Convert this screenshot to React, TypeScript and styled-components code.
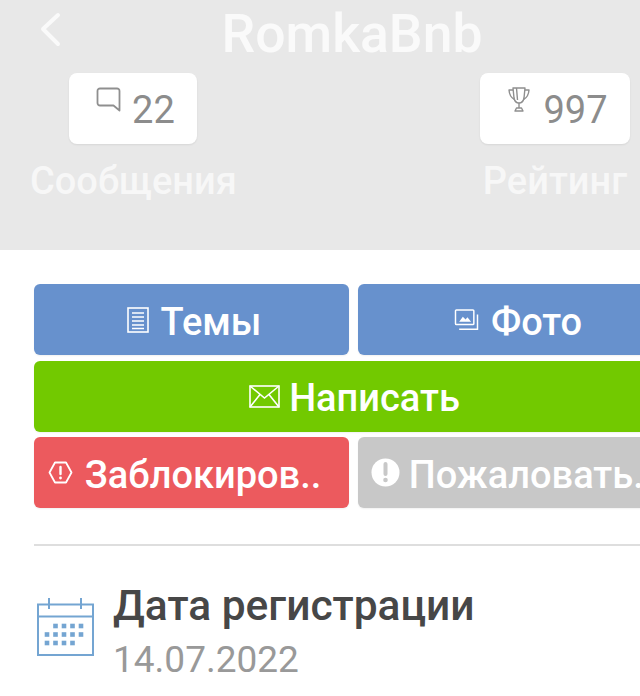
import React from "react";
import styled, { createGlobalStyle } from "styled-components";

const Global = createGlobalStyle`
  html, body { margin: 0; padding: 0; background: #fff; overflow: hidden; height: 696px; width: 640px; }
  #root { width: 640px; height: 696px; overflow: hidden; }
  * { box-sizing: border-box; }
`;

const Page = styled.div`
  width: 706px;
  font-family: Roboto, "Liberation Sans", sans-serif;
`;

const Header = styled.header`
  height: 250px;
  background: #e8e8e8;
  padding: 0 76px 0 30px;
  display: flex;
  flex-direction: column;
`;

const TopBar = styled.div`
  height: 73px;
  display: flex;
  align-items: flex-start;
  position: relative;
`;

const BackIcon = styled.svg`
  position: absolute;
  left: 9px;
  top: 12px;
  width: 24px;
  height: 36px;
`;

const Title = styled.h1`
  flex: 1;
  margin: 2px 0 0;
  padding-left: 44px;
  text-align: center;
  font-size: 53.5px;
  line-height: 64px;
  font-weight: 500;
  color: #fafafa;
`;

const Stats = styled.div`
  display: flex;
  justify-content: space-between;
`;

const Stat = styled.div`
  display: flex;
  flex-direction: column;
  align-items: center;
  gap: 17px;
`;

const StatBox = styled.div<{ $w: number; $gap: number; $left: number }>`
  width: ${(p) => p.$w}px;
  height: 71px;
  padding-left: ${(p) => p.$left}px;
  background: #fff;
  border-radius: 8px;
  box-shadow: 0 1px 2px rgba(0, 0, 0, 0.08);
  display: flex;
  align-items: center;
  justify-content: center;
  gap: ${(p) => p.$gap}px;
  color: #8c8c8c;
  font-size: 38px;
  line-height: 67px;
`;

const StatValue = styled.span`
  padding-top: 4px;
`;

const StatIcon = styled.svg<{ $w: number; $h: number }>`
  width: ${(p) => p.$w}px;
  height: ${(p) => p.$h}px;
  margin-top: -18px;
  flex: none;
`;

const StatLabel = styled.div`
  font-size: 38px;
  line-height: 40px;
  font-weight: 500;
  color: #f7f7f7;
  white-space: nowrap;
`;

const Actions = styled.section`
  padding: 34px 33px 0 34px;
  display: flex;
  flex-direction: column;
  gap: 5.5px;
`;

const ActionRow = styled.div`
  display: grid;
  grid-template-columns: 315px 315px;
  gap: 9px;
`;

const Action = styled.div<{ $bg: string; $wide?: boolean; $left?: number; $right?: number; $gap?: number }>`
  grid-column: ${(p) => (p.$wide ? "1 / -1" : "auto")};
  height: 71px;
  padding: 0 ${(p) => p.$right ?? 0}px 0 ${(p) => p.$left ?? 0}px;
  background: ${(p) => p.$bg};
  border-radius: 6px;
  display: flex;
  align-items: center;
  justify-content: center;
  gap: ${(p) => p.$gap ?? 12}px;
  color: #fff;
  font-size: 38px;
  line-height: 46px;
  font-weight: 500;
  white-space: nowrap;
  overflow: hidden;
  box-shadow: 0 1px 2px rgba(0, 0, 0, 0.06);
`;

const ActionLabel = styled.span`
  padding-top: 4px;
`;

const ActionIcon = styled.svg`
  flex: none;
`;

const Divider = styled.hr`
  margin: 36px 0 0 34px;
  border: 0;
  height: 2px;
  background: #dedede;
`;

const Info = styled.div`
  margin-top: 33px;
  padding-left: 37px;
  display: flex;
  align-items: flex-start;
  gap: 19px;
`;

const InfoIcon = styled.svg`
  width: 57px;
  height: 58px;
  flex: none;
  margin-top: 19px;
`;

const InfoText = styled.div`
  display: flex;
  flex-direction: column;
`;

const InfoTitle = styled.div`
  font-size: 42.5px;
  line-height: 54px;
  font-weight: 500;
  color: #474747;
`;

const InfoValue = styled.div`
  margin-top: 4px;
  font-size: 37px;
  line-height: 46px;
  color: #999;
`;

const dotX = [10, 18.5, 27, 35.5, 44];
const dotRows: [number, number[]][] = [
  [28, [1, 2, 3, 4]],
  [36.5, [0, 1, 2, 3, 4]],
  [45, [0, 1, 2, 3]],
];
const dots = dotRows.flatMap(([y, cols]) => cols.map((c) => [dotX[c], y]));

export default function App() {
  return (
    <Page>
      <Global />
      <Header>
        <TopBar>
          <BackIcon viewBox="0 0 24 36" fill="none" stroke="#fafafa" strokeWidth="4" strokeLinecap="round" strokeLinejoin="round">
            <path d="M19 3 L4 17 L19 32" />
          </BackIcon>
          <Title>RomkaBnb</Title>
        </TopBar>
        <Stats>
          <Stat>
            <StatBox $w={128} $gap={11} $left={4}>
              <StatIcon $w={25} $h={25} viewBox="0 0 25 25" fill="none" stroke="#8f8f8f" strokeWidth="1.8" strokeLinejoin="round">
                <path d="M4 1.5 H21 A2.5 2.5 0 0 1 23.5 4 V23.5 L17.5 18.5 H4 A2.5 2.5 0 0 1 1.5 16 V4 A2.5 2.5 0 0 1 4 1.5 Z" />
              </StatIcon>
              <StatValue>22</StatValue>
            </StatBox>
            <StatLabel>Сообщения</StatLabel>
          </Stat>
          <Stat>
            <StatBox $w={150} $gap={13} $left={6}>
              <StatIcon $w={22} $h={25} viewBox="0 0 22 25" fill="none" stroke="#8f8f8f" strokeWidth="1.4" strokeLinejoin="round">
                <path d="M5 1 H17 L16 11 Q15 16 11 16 Q7 16 6 11 Z" />
                <path d="M8.5 1 L9.5 13 M5 3 H1 Q1.5 10 6.5 12.5 M17 3 H21 Q20.5 10 15.5 12.5" />
                <path d="M11 16 V21 M7 24 H15 L13.5 21 H8.5 Z" />
              </StatIcon>
              <StatValue>997</StatValue>
            </StatBox>
            <StatLabel>Рейтинг</StatLabel>
          </Stat>
        </Stats>
      </Header>
      <Actions>
        <ActionRow>
          <Action $bg="#6791cd" $left={5}>
            <ActionIcon width="22" height="26" viewBox="0 0 22 26" fill="none" stroke="#fff" strokeWidth="1.6">
              <rect x="1" y="1" width="20" height="24" />
              <path d="M5 6 H17 M5 10 H17 M5 14 H17 M5 18 H17 M5 21.5 H17" />
            </ActionIcon>
            <ActionLabel>Темы</ActionLabel>
          </Action>
          <Action $bg="#6791cd" $left={5}>
            <ActionIcon width="25" height="22" viewBox="0 0 26 24" fill="none" stroke="#fff" strokeWidth="1.6">
              <rect x="1" y="1" width="20" height="16" rx="1" />
              <path d="M25 6 V22 H5" />
              <path d="M5 14 L9 8.5 L12 11.5 L14 9 L18 14 Z" fill="#fff" stroke="none" />
            </ActionIcon>
            <ActionLabel>Фото</ActionLabel>
          </Action>
        </ActionRow>
        <ActionRow>
          <Action $bg="#72c900" $wide $gap={9} $left={2}>
            <ActionIcon width="31" height="23" viewBox="0 0 31 23" fill="none" stroke="#fff" strokeWidth="1.6">
              <rect x="1" y="1" width="29" height="21" />
              <path d="M1 1 L15.5 13 L30 1 M1 22 L11 9.5 M30 22 L20 9.5" />
            </ActionIcon>
            <ActionLabel>Написать</ActionLabel>
          </Action>
        </ActionRow>
        <ActionRow>
          <Action $bg="#ec5a5e" $right={14}>
            <ActionIcon width="25" height="23" viewBox="0 0 25 23" fill="none" stroke="#fff" strokeWidth="1.8">
              <path d="M7 1.5 H18 L23.5 11.5 L18 21.5 H7 L1.5 11.5 Z" strokeLinejoin="round" />
              <path d="M12.5 6 V13" strokeWidth="2.4" strokeLinecap="round" />
              <circle cx="12.5" cy="17" r="1.4" fill="#fff" stroke="none" />
            </ActionIcon>
            <ActionLabel>Заблокиров..</ActionLabel>
          </Action>
          <Action $bg="#c8c8c8" $right={6} $gap={9}>
            <ActionIcon width="29" height="29" viewBox="0 0 29 29">
              <circle cx="14.5" cy="14.5" r="14" fill="#fff" />
              <path d="M14.5 6 V16" stroke="#c8c8c8" strokeWidth="4" strokeLinecap="round" />
              <circle cx="14.5" cy="22" r="2.3" fill="#c8c8c8" />
            </ActionIcon>
            <ActionLabel>Пожаловать..</ActionLabel>
          </Action>
        </ActionRow>
      </Actions>
      <Divider />
      <Info>
        <InfoIcon viewBox="0 0 57 58" fill="none" stroke="#74a5d2" strokeWidth="2">
          <rect x="1" y="6.5" width="55" height="50.5" />
          <path d="M1 18.5 H56 M12 0 V11 M44 0 V11" />
          {dots.map(([x, y]) => (
            <rect key={`${x}-${y}`} x={x - 2.3} y={y - 2.3} width="4.6" height="4.6" fill="#74a5d2" stroke="none" />
          ))}
        </InfoIcon>
        <InfoText>
          <InfoTitle>Дата регистрации</InfoTitle>
          <InfoValue>14.07.2022</InfoValue>
        </InfoText>
      </Info>
    </Page>
  );
}
